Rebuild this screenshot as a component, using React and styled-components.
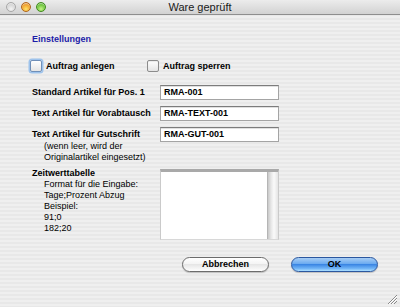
import React from "react";
import styled, { createGlobalStyle } from "styled-components";

const Global = createGlobalStyle`
  html, body { margin: 0; padding: 0; }
  body { font-family: "Liberation Sans", Arial, sans-serif; }
  * { box-sizing: border-box; }
`;

const Window = styled.div`
  position: relative;
  width: 400px;
  height: 307px;
  display: flex;
  flex-direction: column;
  background: repeating-linear-gradient(to bottom, #efefef 0, #efefef 2px, #e8e8e8 2px, #e8e8e8 4px);
  overflow: hidden;
`;

const TitleBar = styled.div`
  height: 15px;
  flex: none;
  display: flex;
  align-items: center;
  position: relative;
  background: linear-gradient(to bottom, #ececec, #d2d2d2);
  border-bottom: 1px solid #8e8e8e;
`;

const Lights = styled.div`
  display: flex;
  gap: 5px;
  padding-left: 6px;
`;

const Light = styled.span`
  width: 10px;
  height: 10px;
  border-radius: 50%;
  border: 1px solid ${(p) => p.$edge};
  background: radial-gradient(circle at 50% 75%, ${(p) => p.$glow} 0, ${(p) => p.$base} 60%, ${(p) => p.$dark} 100%);
  box-shadow: inset 0 1px 1px rgba(255,255,255,0.6);
`;

const Title = styled.div`
  position: absolute;
  left: 0;
  right: 0;
  top: 0;
  height: 15px;
  line-height: 15px;
  text-align: center;
  font-size: 11px;
  color: #1a1a1a;
  pointer-events: none;
`;

const Body = styled.div`
  flex: 1;
  display: flex;
  flex-direction: column;
  padding: 18px 22px 0 32px;
  font-size: 9px;
  line-height: 11px;
  color: #000;
`;

const SectionTitle = styled.div`
  font-weight: bold;
  color: #1c1ca8;
  margin-top: 1px;
`;

const CheckRow = styled.div`
  display: flex;
  margin-top: 15px;
  margin-left: -2px;
  height: 12px;
  align-items: center;
`;

const CheckItem = styled.label`
  display: flex;
  align-items: center;
  gap: 4px;
  width: ${(p) => p.$w}px;
  font-weight: bold;
`;

const Box = styled.span`
  width: 12px;
  height: 12px;
  border-radius: 2px;
  border: 1px solid ${(p) => (p.$focus ? "#6f8fb8" : "#8c8c8c")};
  background: linear-gradient(to bottom, #ffffff, #e4e4e4);
  box-shadow: ${(p) => (p.$focus ? "0 0 0 1.5px #9ec3ec" : "inset 0 1px 1px rgba(0,0,0,0.08)")};
`;

const Form = styled.div`
  display: grid;
  grid-template-columns: 128px 119px;
  row-gap: 6px;
  margin-top: 13px;
  align-items: start;
`;

const LabelCell = styled.div`
  font-weight: bold;
  line-height: ${(p) => p.$lh || 15}px;
  white-space: nowrap;
`;

const Note = styled.div`
  font-weight: normal;
  line-height: 11px;
  padding-left: 12px;
  white-space: nowrap;
`;

const TextInput = styled.div`
  height: 15px;
  background: #fff;
  border: 1px solid #a4a4a4;
  border-top-color: #7c7c7c;
  font-weight: bold;
  padding-left: 3px;
  line-height: 13px;
  box-shadow: inset 0 1px 0 #e0e0e0;
`;

const TableRow = styled.div`
  display: grid;
  grid-template-columns: 128px 119px;
  margin-top: 5px;
  align-items: start;
`;

const TextArea = styled.div`
  margin-top: 1px;
  height: 71px;
  background: #fff;
  border-top: 3px solid #a9a9a9;
  border-left: 1px solid #cacaca;
  border-right: 1px solid #cacaca;
  border-bottom: 1px solid #d8d8d8;
  display: flex;
  justify-content: flex-end;
`;

const Scroll = styled.div`
  width: 11px;
  background: linear-gradient(to right, #c8c8c8 0, #e6e6e6 30%, #fafafa 60%, #e4e4e4 100%);
  border-left: 1px solid #b5b5b5;
`;

const Buttons = styled.div`
  display: flex;
  justify-content: flex-end;
  gap: 22px;
  margin-top: 17px;
`;

const Button = styled.div`
  width: 87px;
  height: 15px;
  border-radius: 8px;
  display: flex;
  align-items: center;
  justify-content: center;
  font-weight: bold;
  font-size: 9px;
  color: #000;
  border: 1px solid ${(p) => (p.$primary ? "#2b579f" : "#6c6c6c")};
  background: ${(p) =>
    p.$primary
      ? "linear-gradient(to bottom, #a8cdf4 0, #6aaaf0 45%, #3b86e4 50%, #6fb3f6 80%, #aee0ff 100%)"
      : "linear-gradient(to bottom, #ffffff 0, #f4f4f4 45%, #e6e6e6 50%, #f4f4f4 80%, #ffffff 100%)"};
  box-shadow: 0 1px 1px rgba(0,0,0,0.2);
`;

const Grip = styled.svg`
  position: absolute;
  right: 2px;
  bottom: 2px;
`;

export default function App() {
  return (
    <>
      <Global />
      <Window>
        <TitleBar>
          <Lights>
            <Light $edge="#a8a8a8" $base="#d6d6d6" $glow="#f4f4f4" $dark="#bdbdbd" />
            <Light $edge="#b0651a" $base="#f0a02a" $glow="#ffe36b" $dark="#d0701a" />
            <Light $edge="#3f8a1c" $base="#6cc43a" $glow="#c8f48a" $dark="#3e9a1e" />
          </Lights>
          <Title>Ware geprüft</Title>
        </TitleBar>
        <Body>
          <SectionTitle>Einstellungen</SectionTitle>
          <CheckRow>
            <CheckItem $w={117}>
              <Box $focus />
              Auftrag anlegen
            </CheckItem>
            <CheckItem $w={120}>
              <Box />
              Auftrag sperren
            </CheckItem>
          </CheckRow>
          <Form>
            <LabelCell>Standard Artikel für Pos. 1</LabelCell>
            <TextInput>RMA-001</TextInput>
            <LabelCell>Text Artikel für Vorabtausch</LabelCell>
            <TextInput>RMA-TEXT-001</TextInput>
            <div>
              <LabelCell $lh={14}>Text Artikel für Gutschrift</LabelCell>
              <Note>(wenn leer, wird der</Note>
              <Note>Originalartikel eingesetzt)</Note>
            </div>
            <TextInput>RMA-GUT-001</TextInput>
          </Form>
          <TableRow>
            <div>
              <LabelCell $lh={11}>Zeitwerttabelle</LabelCell>
              <Note>Format für die Eingabe:</Note>
              <Note>Tage;Prozent Abzug</Note>
              <Note>Beispiel:</Note>
              <Note>91;0</Note>
              <Note>182;20</Note>
            </div>
            <TextArea>
              <Scroll />
            </TextArea>
          </TableRow>
          <Buttons>
            <Button>Abbrechen</Button>
            <Button $primary>OK</Button>
          </Buttons>
        </Body>
        <Grip width="11" height="11" viewBox="0 0 11 11">
          <g stroke="#8a8a8a" strokeWidth="1">
            <line x1="10" y1="1" x2="1" y2="10" />
            <line x1="10" y1="4" x2="4" y2="10" />
            <line x1="10" y1="7" x2="7" y2="10" />
          </g>
          <g stroke="#ffffff" strokeWidth="1">
            <line x1="10" y1="2" x2="2" y2="10" />
            <line x1="10" y1="5" x2="5" y2="10" />
          </g>
        </Grip>
      </Window>
    </>
  );
}
